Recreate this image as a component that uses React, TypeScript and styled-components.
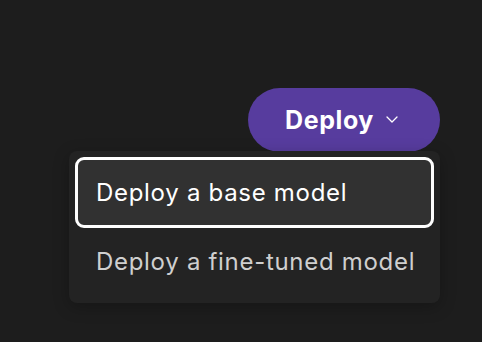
import React from "react";
import styled, { createGlobalStyle } from "styled-components";

const Global = createGlobalStyle`
  html, body { margin: 0; padding: 0; background: #1d1d1d; }
  body { font-family: Inter, "Noto Sans", sans-serif; }
`;

const Page = styled.div`
  width: 482px;
  height: 342px;
  box-sizing: border-box;
  padding: 88px 42px 0 0;
  display: flex;
  flex-direction: column;
  align-items: flex-end;
`;

const Anchor = styled.div`
  position: relative;
`;

const Trigger = styled.button`
  height: 64px;
  width: 192px;
  box-sizing: border-box;
  border: none;
  border-radius: 32px;
  background: #573c9e;
  color: #ffffff;
  display: flex;
  align-items: center;
  justify-content: flex-start;
  gap: 12px;
  padding: 0 0 1px 37px;
  font-family: inherit;
  font-size: 25px;
  letter-spacing: 0.6px;
  font-weight: 700;
  cursor: pointer;
`;

const Menu = styled.div`
  position: absolute;
  top: 63px;
  right: 0;
  width: 371px;
  box-sizing: border-box;
  padding: 6px 6px 9px;
  background: #232323;
  border-radius: 8px;
  box-shadow: 0 4px 16px rgba(0, 0, 0, 0.25);
  display: flex;
  flex-direction: column;
`;

const Item = styled.div<{ $active?: boolean }>`
  height: ${(p) => (p.$active ? 71 : 66)}px;
  box-sizing: border-box;
  display: flex;
  align-items: center;
  padding-left: 18px;
  border-radius: 9px;
  border: 3px solid ${(p) => (p.$active ? "#ffffff" : "transparent")};
  background: ${(p) => (p.$active ? "#313131" : "transparent")};
  color: ${(p) => (p.$active ? "#ffffff" : "#cfcfcf")};
  font-size: 24px;
  letter-spacing: 0.7px;
  font-weight: 400;
`;

const Chevron = () => (
  <svg width="12" height="7" viewBox="0 0 12 7" fill="none">
    <path d="M1 1l5 5 5-5" stroke="#ffffff" strokeWidth="1.3" strokeLinecap="round" strokeLinejoin="round" />
  </svg>
);

export default function App() {
  return (
    <>
      <Global />
      <Page>
        <Anchor>
          <Trigger>
            Deploy
            <Chevron />
          </Trigger>
          <Menu>
            <Item $active>Deploy a base model</Item>
            <Item>Deploy a fine-tuned model</Item>
          </Menu>
        </Anchor>
      </Page>
    </>
  );
}
